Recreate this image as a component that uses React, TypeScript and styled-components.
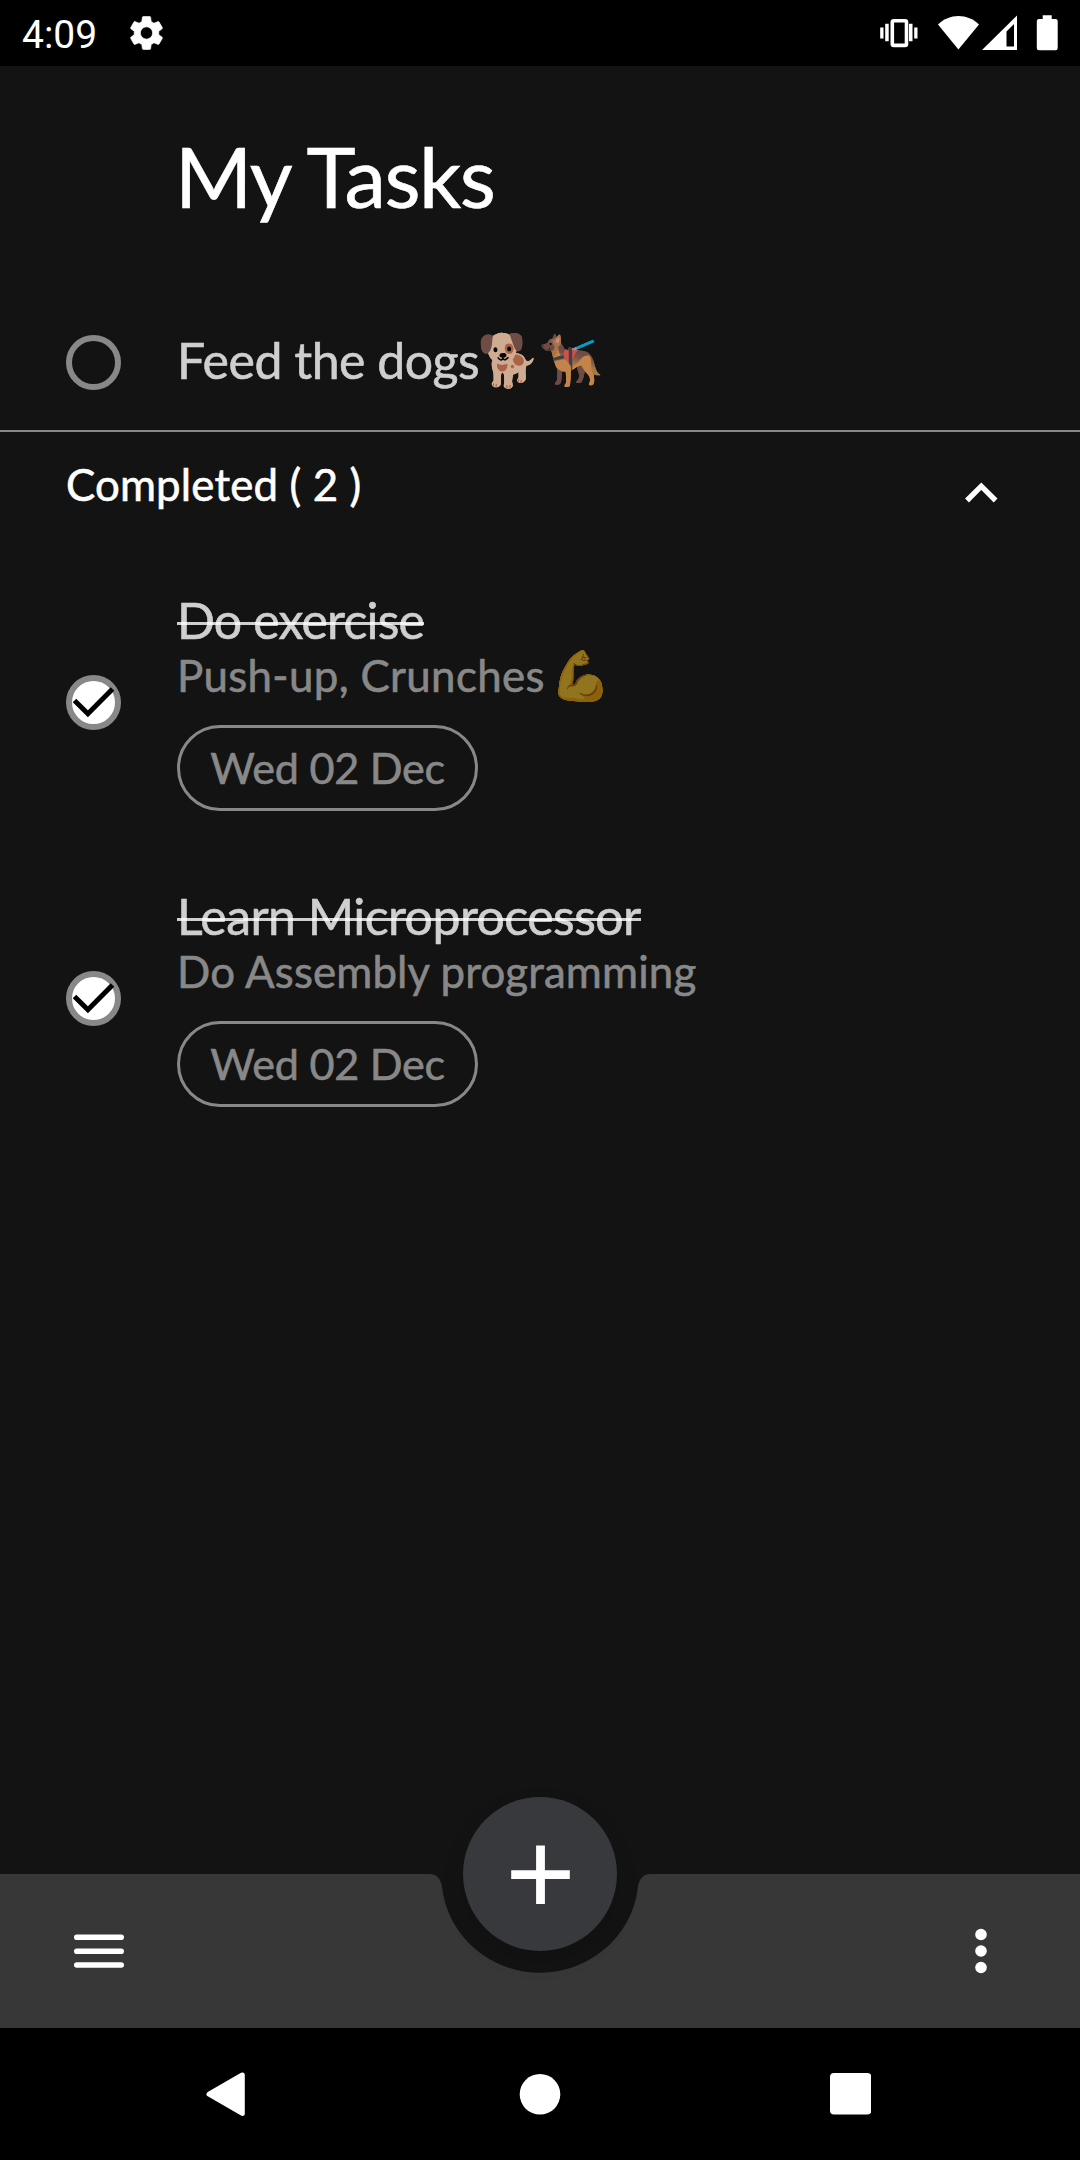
import React from "react";
import styled, { createGlobalStyle } from "styled-components";

const GlobalStyle = createGlobalStyle`
  * { box-sizing: border-box; }
  body { margin: 0; background: #131313; }
`;

const Screen = styled.div`
  display: flex;
  flex-direction: column;
  width: 1080px;
  height: 2160px;
  overflow: hidden;
  background: #131313;
  color: #fff;
  font-family: Lato, "Noto Color Emoji", sans-serif;
  -webkit-text-stroke-width: 0.6px;
`;

const StatusBar = styled.header`
  display: flex;
  align-items: center;
  justify-content: space-between;
  height: 66px;
  padding: 0 22px;
  background: #000;
`;

const StatusGroup = styled.div`
  display: flex;
  align-items: center;
`;

const Clock = styled.span`
  width: 104px;
  padding-top: 3px;
  font: 400 39px/66px Roboto, sans-serif;
  -webkit-text-stroke-width: 0;
`;

const Content = styled.main`
  flex: 1;
  display: flex;
  flex-direction: column;
`;

const Title = styled.h1`
  margin: 0;
  padding: 0 0 0 175px;
  height: 222px;
  font-size: 83.3px;
  font-weight: 400;
  line-height: 220px;
  letter-spacing: -1.55px;
`;

const Row = styled.div`
  display: grid;
  grid-template-columns: 55px 1fr;
  column-gap: 56px;
  align-items: center;
  padding: 0 66px;
`;

const OpenRow = styled(Row)`
  height: 135px;
  margin-top: 7px;
`;

const DoneRow = styled(Row)`
  height: 216px;
`;

const Check = styled.button<{ $done?: boolean }>`
  display: block;
  width: 55px;
  height: 55px;
  padding: 0;
  margin-top: ${(p) => (p.$done ? "-2px" : "0")};
  border: 6px solid #888;
  border-radius: 50%;
  background: ${(p) => (p.$done ? "#fff" : "transparent")};

  svg {
    display: block;
    width: 43px;
    height: 43px;
  }
`;

const TaskName = styled.div<{ $track: number }>`
  display: flex;
  height: 50px;
  font-size: 50px;
  line-height: 50px;
  letter-spacing: ${(p) => p.$track}px;
  white-space: pre;
  color: #cfcfcf;
`;

const OpenName = styled(TaskName)`
  margin-top: -5px;
`;

const Struck = styled.span`
  position: relative;

  &::after {
    content: "";
    position: absolute;
    left: 0;
    right: 0;
    top: 27px;
    height: 3px;
    background: rgba(255, 255, 255, 0.8);
  }
`;

const Emoji = styled.span<{ $size: number; $opacity: number; $gap?: number }>`
  font-family: "Noto Color Emoji", sans-serif;
  font-size: ${(p) => p.$size}px;
  letter-spacing: 0;
  color: #fff;
  opacity: ${(p) => p.$opacity};
  margin: 1px 0 0 ${(p) => p.$gap ?? 0}px;
`;

const Detail = styled.div<{ $track: number }>`
  display: flex;
  height: 61px;
  margin-bottom: 19px;
  font-size: 43.8px;
  line-height: 61px;
  letter-spacing: ${(p) => p.$track}px;
  white-space: pre;
  color: #888;
`;

const DateChip = styled.div`
  width: 301px;
  height: 86px;
  border: 3px solid #888;
  border-radius: 43px;
  font-size: 43.2px;
  line-height: 78px;
  letter-spacing: -0.29px;
  text-align: center;
  color: #888;
`;

const Divider = styled.hr`
  width: 100%;
  height: 2px;
  margin: 0;
  border: 0;
  background: #888;
`;

const SectionHeader = styled.div`
  display: flex;
  justify-content: space-between;
  align-items: center;
  height: 105px;
  padding: 0 82px 0 66px;
  font-size: 43.8px;
  letter-spacing: 0.15px;

  span {
    margin-top: -1px;
  }
  svg {
    margin-top: 15px;
  }
`;

const DoneList = styled.section`
  display: flex;
  flex-direction: column;
  gap: 80px;
  padding-top: 58px;
`;

const BottomBar = styled.div`
  position: relative;
  display: flex;
  align-items: center;
  justify-content: space-between;
  height: 154px;
  padding: 0 91px 0 74px;
`;

const BarShape = styled.svg`
  position: absolute;
  inset: 0;
`;

const BarIcon = styled.svg`
  position: relative;
  display: block;
`;

const AddButton = styled.button`
  position: absolute;
  left: 463px;
  top: -77px;
  display: grid;
  place-items: center;
  width: 154px;
  height: 154px;
  padding: 0;
  border: 0;
  border-radius: 50%;
  background: #38393d;
  box-shadow: 0 10px 22px rgba(0, 0, 0, 0.14);
`;

const NavBar = styled.nav`
  display: flex;
  align-items: center;
  justify-content: space-between;
  height: 132px;
  padding: 0 209px 0 206px;
  background: #000;
`;

const HomeDot = styled.svg`
  margin-left: 4px;
`;

const StatusIcons = () => (
  <svg width="180" height="36" viewBox="0 0 180 36" fill="#fff">
    <path d="M2.200 12.500h3.300v11H2.200zM7.200 8.700h3.500v17.500H7.200zM31 8.700h3.500v17.500H31zM36.200 12.500h3.300v11h-3.300z" />
    <rect x="14.300" y="5.800" width="14.200" height="24.600" rx="1.500" fill="none" stroke="#fff" strokeWidth="3.600" />
    <path d="M60 9.500C71.500-2 89.500-2 101 9.500L80.400 34.400z" />
    <path fillRule="evenodd" d="M139 .5V35h-35zM136 9l-7.500 7.500V31.500h7.500z" />
    <path d="M165.500.3h9v3.600h3.800a2.200 2.200 0 0 1 2.200 2.200V33a2.200 2.200 0 0 1-2.200 2.200h-16.500a2.200 2.200 0 0 1-2.200-2.200V6.100a2.200 2.200 0 0 1 2.200-2.200h3.700z" transform="translate(-.8)" />
  </svg>
);

const Gear = () => (
  <svg width="41" height="42" viewBox="0 0 24 24" fill="#fff">
    <path d="M19.140 12.940c.040-.300.060-.610.060-.940 0-.320-.020-.640-.070-.940l2.030-1.580a.490.490 0 0 0 .120-.610l-1.920-3.320a.488.488 0 0 0-.590-.220l-2.390.960c-.500-.380-1.030-.700-1.620-.940l-.360-2.540a.484.484 0 0 0-.480-.410h-3.840c-.240 0-.430.170-.470.410l-.360 2.540c-.590.240-1.130.570-1.620.940l-2.390-.960c-.220-.080-.470 0-.590.220L2.740 8.870c-.120.210-.080.470.120.610l2.030 1.580c-.050.300-.090.630-.090.940s.020.640.070.940l-2.030 1.580a.490.490 0 0 0-.120.610l1.920 3.320c.120.220.370.290.590.220l2.390-.960c.500.380 1.030.700 1.620.940l.360 2.540c.050.240.240.410.480.410h3.840c.240 0 .440-.170.470-.410l.360-2.540c.590-.240 1.130-.560 1.620-.940l2.390.960c.220.080.470 0 .590-.220l1.920-3.320c.120-.220.070-.470-.120-.610l-2.010-1.580zM12 15.600A3.600 3.600 0 1 1 12 8.400a3.600 3.600 0 0 1 0 7.200z" stroke="#fff" strokeWidth=".4" />
  </svg>
);

interface DoneTask {
  name: string;
  nameTrack: number;
  detail: string;
  detailTrack: number;
  emoji?: string;
  date: string;
}

const doneTasks: DoneTask[] = [
  { name: "Do exercise", nameTrack: -0.83, detail: "Push-up, Crunches", detailTrack: 0.36, emoji: "💪", date: "Wed 02 Dec" },
  { name: "Learn Microprocessor", nameTrack: -0.55, detail: "Do Assembly programming", detailTrack: 0.14, date: "Wed 02 Dec" },
];

export default function App() {
  return (
    <Screen>
      <GlobalStyle />
      <StatusBar>
        <StatusGroup>
          <Clock>4:09</Clock>
          <Gear />
        </StatusGroup>
        <StatusIcons />
      </StatusBar>
      <Content>
        <Title>My Tasks</Title>
        <OpenRow>
          <Check aria-label="Mark complete" />
          <OpenName $track={-0.5}>
            Feed the dogs
            <Emoji $size={51} $opacity={0.8} $gap={-2}>🐕</Emoji>
            <Emoji $size={51} $opacity={0.8} $gap={-1}>🐕‍🦺</Emoji>
          </OpenName>
        </OpenRow>
        <Divider />
        <SectionHeader>
          <span>Completed ( 2 )</span>
          <svg width="33" height="21" viewBox="0 0 33 21" fill="none" stroke="#fff" strokeWidth="5.4">
            <path d="M2 18.500L16.300 4.200L30.600 18.500" />
          </svg>
        </SectionHeader>
        <DoneList>
          {doneTasks.map((t) => (
            <DoneRow key={t.name}>
              <Check $done aria-label="Mark incomplete">
                <svg viewBox="0 0 43 43" fill="none" stroke="#000" strokeWidth="5">
                  <path d="M2.500 19.500L15.900 32.700L40.500 8.100" />
                </svg>
              </Check>
              <div>
                <TaskName $track={t.nameTrack}>
                  <Struck>{t.name}</Struck>
                </TaskName>
                <Detail $track={t.detailTrack}>
                  {t.detail}
                  {t.emoji && (
                    <Emoji $size={49} $opacity={0.53} $gap={6}>{t.emoji}</Emoji>
                  )}
                </Detail>
                <DateChip>{t.date}</DateChip>
              </div>
            </DoneRow>
          ))}
        </DoneList>
      </Content>
      <BottomBar>
        <BarShape width="1080" height="154" viewBox="0 0 1080 154">
          <path
            fill="#373737"
            d="M0 0H430C437 0 441.500 6 442.200 14C448 62 490 98.700 540 98.700S632 62 637.800 14C638.500 6 643 0 650 0H1080V154H0z"
          />
        </BarShape>
        <BarIcon width="50" height="35" viewBox="0 0 50 35" stroke="#fff" strokeWidth="5.600" strokeLinecap="round">
          <path d="M2.800 3.300H47.200M2.800 17.200H47.200M2.800 31H47.200" />
        </BarIcon>
        <BarIcon width="16" height="50" viewBox="0 0 16 50" fill="#fff">
          <circle cx="8" cy="8.500" r="5.800" />
          <circle cx="8" cy="25" r="5.800" />
          <circle cx="8" cy="41.500" r="5.800" />
        </BarIcon>
        <AddButton aria-label="Add task">
          <svg width="60" height="60" viewBox="0 0 60 60" stroke="#fff" strokeWidth="8.800">
            <path d="M1.200 30.700H59.800M30.500 1.400V60" />
          </svg>
        </AddButton>
      </BottomBar>
      <NavBar>
        <svg width="40" height="46" viewBox="0 0 40 46" fill="#fff" stroke="#fff" strokeWidth="5" strokeLinejoin="round">
          <path d="M3 23.200L36.300 4V42.400z" />
        </svg>
        <HomeDot width="42" height="42" viewBox="0 0 42 42" fill="#fff">
          <circle cx="21" cy="21.300" r="20.300" />
        </HomeDot>
        <svg width="41.500" height="41.500" viewBox="0 0 41.500 41.500" fill="#fff">
          <rect width="41.500" height="41.500" rx="4" />
        </svg>
      </NavBar>
    </Screen>
  );
}
